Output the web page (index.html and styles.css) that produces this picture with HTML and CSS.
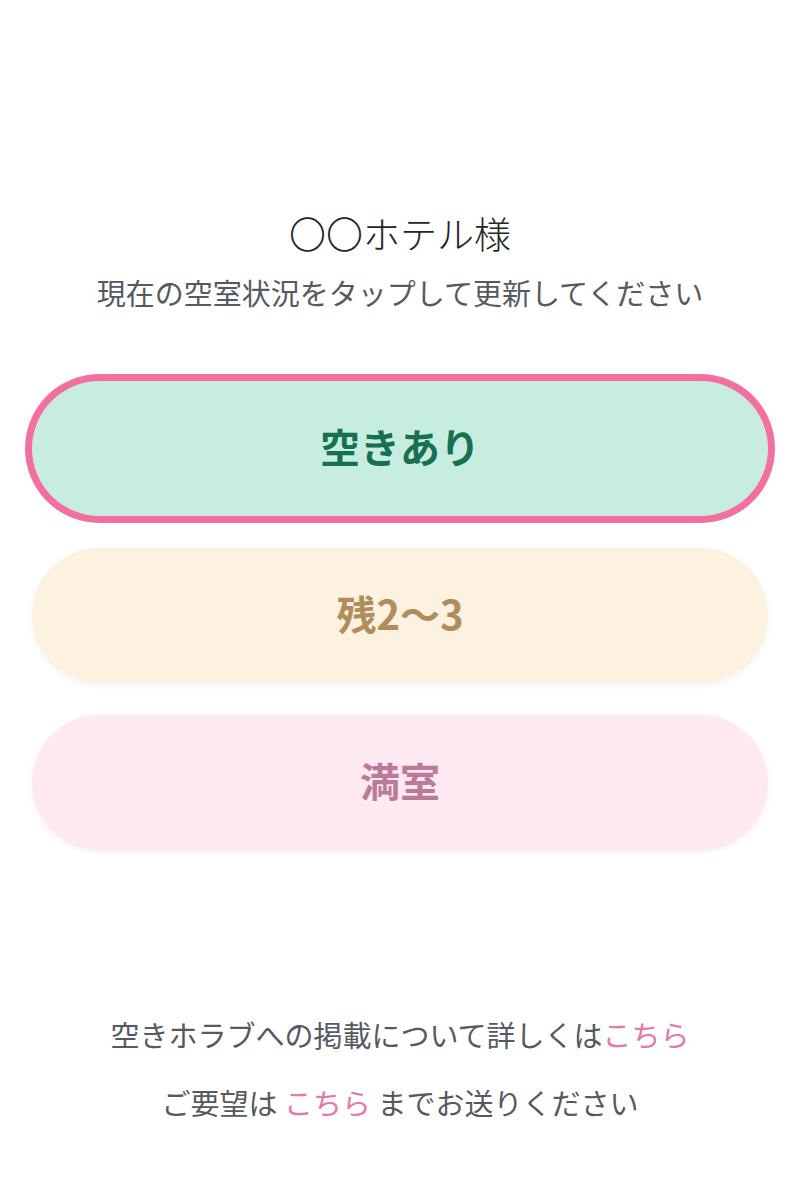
FILE: index.html
```html
<!DOCTYPE html>
<html lang="ja">
<head>
<meta charset="utf-8">
<title>空室状況</title>
<link rel="stylesheet" href="styles.css">
</head>
<body>
<main class="page">
  <header class="head">
    <h1 class="title">〇〇ホテル様</h1>
    <p class="lead">現在の空室状況をタップして更新してください</p>
  </header>
  <div class="options">
    <button class="opt opt-free is-selected" type="button">空きあり</button>
    <button class="opt opt-few" type="button">残2〜3</button>
    <button class="opt opt-full" type="button">満室</button>
  </div>
  <footer class="foot">
    <p class="foot-line">空きホラブへの掲載について詳しくは<a class="link" href="#">こちら</a></p>
    <p class="foot-line">ご要望は <a class="link" href="#">こちら</a> までお送りください</p>
  </footer>
</main>
</body>
</html>
```

FILE: styles.css
```css
html, body {
  margin: 0;
  padding: 0;
  background: #ffffff;
}

body {
  font-family: "Noto Sans CJK JP", "Noto Sans", sans-serif;
  color: #333333;
}

.page {
  width: 800px;
  height: 1190px;
  box-sizing: border-box;
  padding: 207px 32px 0;
  display: flex;
  flex-direction: column;
}

.head {
  display: flex;
  flex-direction: column;
  align-items: center;
}

.title {
  margin: 0;
  font-size: 37px;
  font-weight: 300;
  line-height: 52px;
  color: #262626;
}

.lead {
  margin: 13px 0 0;
  font-size: 29px;
  font-weight: 400;
  line-height: 40px;
  color: #555a60;
}

.options {
  margin-top: 69px;
  display: flex;
  flex-direction: column;
  gap: 32px;
}

.opt {
  display: flex;
  align-items: center;
  justify-content: center;
  height: 135px;
  width: 100%;
  border: 0;
  border-radius: 68px;
  font-family: inherit;
  font-size: 40px;
  font-weight: 700;
  letter-spacing: 0;
  box-shadow: 0 2px 6px rgba(0, 0, 0, 0.06);
  cursor: pointer;
  padding: 0 0 5px;
}

.opt-free {
  background: #c6ede0;
  color: #17704f;
}

.opt-few {
  background: #fdf1df;
  color: #b18d5e;
}

.opt-full {
  background: #fde9ef;
  color: #bb7b98;
}

.is-selected {
  box-shadow: 0 0 0 7px #f36f9f;
}

.foot {
  margin-top: 164px;
  display: flex;
  flex-direction: column;
  align-items: center;
  gap: 28px;
}

.foot-line {
  margin: 0;
  font-size: 29px;
  line-height: 40px;
  color: #555a60;
}

.link {
  color: #e27aa8;
  text-decoration: none;
}
```
